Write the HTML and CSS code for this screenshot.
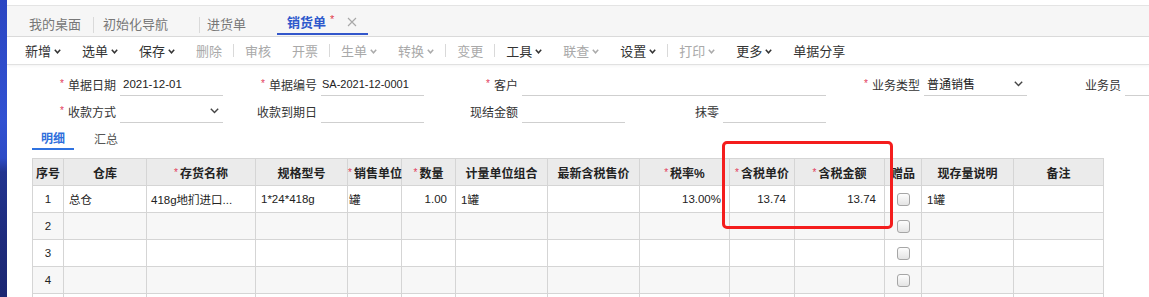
FILE: index.html
```html
<!DOCTYPE html>
<html lang="zh-CN">
<head>
<meta charset="utf-8">
<title>销货单</title>
<link rel="stylesheet" href="styles.css">
</head>
<body>
<div class="app">
  <aside class="rail"></aside>
  <main class="main">
    <div class="topgap"></div>
    <nav class="tabbar">
      <div class="tab t1">我的桌面</div>
      <span class="tab-sep"></span>
      <div class="tab t2">初始化导航</div>
      <span class="tab-sep"></span>
      <div class="tab t3">进货单</div>
      <div class="tab t4 active">销货单<span class="dirty">*</span>
        <svg class="close" width="10" height="10" viewBox="0 0 10 10"><path d="M1 1L9 9M9 1L1 9" stroke="#a8a8a8" stroke-width="1.1" fill="none"/></svg>
      </div>
    </nav>

    <div class="toolbar">
      <span class="tool">新增<svg class="chev" width="7" height="5" viewBox="0 0 7 5"><path d="M0.8 0.8L3.5 3.8L6.2 0.8" fill="none" stroke="#333" stroke-width="1.5"/></svg></span>
      <span class="tool">选单<svg class="chev" width="7" height="5" viewBox="0 0 7 5"><path d="M0.8 0.8L3.5 3.8L6.2 0.8" fill="none" stroke="#333" stroke-width="1.5"/></svg></span>
      <span class="tool">保存<svg class="chev" width="7" height="5" viewBox="0 0 7 5"><path d="M0.8 0.8L3.5 3.8L6.2 0.8" fill="none" stroke="#333" stroke-width="1.5"/></svg></span>
      <span class="tool off">删除</span>
      <span class="tsep"></span>
      <span class="tool off">审核</span>
      <span class="tool off">开票</span>
      <span class="tsep"></span>
      <span class="tool off">生单<svg class="chev" width="7" height="5" viewBox="0 0 7 5"><path d="M0.8 0.8L3.5 3.8L6.2 0.8" fill="none" stroke="#aaa" stroke-width="1.5"/></svg></span>
      <span class="tool off">转换<svg class="chev" width="7" height="5" viewBox="0 0 7 5"><path d="M0.8 0.8L3.5 3.8L6.2 0.8" fill="none" stroke="#aaa" stroke-width="1.5"/></svg></span>
      <span class="tsep"></span>
      <span class="tool off">变更</span>
      <span class="tsep"></span>
      <span class="tool">工具<svg class="chev" width="7" height="5" viewBox="0 0 7 5"><path d="M0.8 0.8L3.5 3.8L6.2 0.8" fill="none" stroke="#333" stroke-width="1.5"/></svg></span>
      <span class="tool off">联查<svg class="chev" width="7" height="5" viewBox="0 0 7 5"><path d="M0.8 0.8L3.5 3.8L6.2 0.8" fill="none" stroke="#aaa" stroke-width="1.5"/></svg></span>
      <span class="tool">设置<svg class="chev" width="7" height="5" viewBox="0 0 7 5"><path d="M0.8 0.8L3.5 3.8L6.2 0.8" fill="none" stroke="#333" stroke-width="1.5"/></svg></span>
      <span class="tsep"></span>
      <span class="tool off">打印<svg class="chev" width="7" height="5" viewBox="0 0 7 5"><path d="M0.8 0.8L3.5 3.8L6.2 0.8" fill="none" stroke="#aaa" stroke-width="1.5"/></svg></span>
      <span class="tool">更多<svg class="chev" width="7" height="5" viewBox="0 0 7 5"><path d="M0.8 0.8L3.5 3.8L6.2 0.8" fill="none" stroke="#333" stroke-width="1.5"/></svg></span>
      <span class="tool">单据分享</span>
    </div>

    <div class="form">
      <label class="lbl req">单据日期</label>
      <div class="fld">2021-12-01</div>
      <label class="lbl req">单据编号</label>
      <div class="fld code">SA-2021-12-0001</div>
      <label class="lbl req">客户</label>
      <div class="fld wide"></div>
      <label class="lbl req">业务类型</label>
      <div class="fld sel">普通销售<svg width="9" height="6" viewBox="0 0 9 6"><path d="M0.8 0.8L4.5 4.6L8.2 0.8" fill="none" stroke="#444" stroke-width="1.4"/></svg></div>
      <label class="lbl">业务员</label>
      <div class="fld"></div>

      <label class="lbl req">收款方式</label>
      <div class="fld sel"><span></span><svg width="9" height="6" viewBox="0 0 9 6"><path d="M0.8 0.8L4.5 4.6L8.2 0.8" fill="none" stroke="#444" stroke-width="1.4"/></svg></div>
      <label class="lbl">收款到期日</label>
      <div class="fld"></div>
      <label class="lbl">现结金额</label>
      <div class="fld"></div>
      <label class="lbl">抹零</label>
      <div class="fld"></div>
    </div>

    <div class="subtabs">
      <span class="subtab on">明细</span>
      <span class="subtab">汇总</span>
    </div>

    <div class="grid-wrap">
      <table class="grid">
        <colgroup>
          <col class="w31"><col class="w83"><col class="w109"><col class="w92"><col class="w54"><col class="w54"><col class="w92"><col class="w92"><col class="w90"><col class="w65"><col class="w90"><col class="w37"><col class="w92"><col class="w90">
        </colgroup>
        <thead>
          <tr>
            <th>序号</th><th>仓库</th><th><i>*</i>存货名称</th><th>规格型号</th><th><i>*</i>销售单位</th><th><i>*</i>数量</th><th>计量单位组合</th><th>最新含税售价</th><th><i>*</i>税率%</th><th><i>*</i>含税单价</th><th><i>*</i>含税金额</th><th>赠品</th><th>现存量说明</th><th>备注</th>
          </tr>
        </thead>
        <tbody>
          <tr>
            <td class="c">1</td><td>总仓</td><td class="txt">418g地扪进口...</td><td>1*24*418g</td><td class="tight">罐</td><td class="num">1.00</td><td>1罐</td><td></td><td class="num">13.00%</td><td class="num">13.74</td><td class="num">13.74</td><td class="c"><span class="cb"></span></td><td>1罐</td><td></td>
          </tr>
          <tr>
            <td class="c">2</td><td></td><td></td><td></td><td></td><td></td><td></td><td></td><td></td><td></td><td></td><td class="c"><span class="cb"></span></td><td></td><td></td>
          </tr>
          <tr>
            <td class="c">3</td><td></td><td></td><td></td><td></td><td></td><td></td><td></td><td></td><td></td><td></td><td class="c"><span class="cb"></span></td><td></td><td></td>
          </tr>
          <tr>
            <td class="c">4</td><td></td><td></td><td></td><td></td><td></td><td></td><td></td><td></td><td></td><td></td><td class="c"><span class="cb"></span></td><td></td><td></td>
          </tr>
          <tr>
            <td class="c"></td><td></td><td></td><td></td><td></td><td></td><td></td><td></td><td></td><td></td><td></td><td class="c"></td><td></td><td></td>
          </tr>
        </tbody>
      </table>
    </div>

    <div class="mark"></div>
  </main>
</div>
</body>
</html>
```

FILE: styles.css
```css
* { box-sizing: border-box; }
html, body { margin: 0; padding: 0; }
body {
  font-family: "Liberation Sans", "Noto Sans CJK SC", sans-serif;
  font-size: 12px;
  color: #333;
  background: #fff;
  overflow: hidden;
}
.app { display: flex; height: 297px; }
.rail {
  width: 7px;
  flex: none;
  background: linear-gradient(to bottom, #2b46c2 0, #3151d2 120px, #2d4bc6 158px, #22348f 172px, #1e2b7c 240px, #1b2772 100%);
}
.main { flex: 1; position: relative; min-width: 0; overflow: hidden; }
.topgap { height: 5px; background: #fff; }

/* top tabs */
.tabbar {
  height: 32px;
  border-top: 1px solid #e4e4e4;
  border-bottom: 1px solid #dcdcdc;
  background: #f6f6f6;
  display: flex;
  padding-left: 12px;
}
.tab {
  display: flex;
  align-items: center;
  padding-top: 4px;
  font-size: 13px;
  color: #777;
  white-space: nowrap;
}
.t1 { width: 74px; padding-left: 10px; }
.t2 { width: 105px; padding-left: 9px; }
.t3 { width: 77px; padding-left: 7px; }
.t4 { width: 91px; padding-left: 10px; }
.tab-sep { width: 1px; background: #dadada; margin: 11px 0 3px; }
.tab.active {
  color: #2d58cc;
  font-weight: bold;
  border-bottom: 2px solid #3357cb;
  margin-bottom: 1px;
}
.dirty { color: #e23a4a; font-weight: normal; font-size: 11px; margin-left: 4px; position: relative; top: -3px; }
.close { margin-left: 13px; }

/* toolbar */
.toolbar {
  height: 28px;
  border-bottom: 1px solid #e1e1e1;
  box-shadow: 0 1px 3px rgba(0, 0, 0, 0.05);
  display: flex;
  align-items: center;
  padding-left: 18px;
  font-size: 13px;
  background: #fff;
}
.tool { display: flex; align-items: center; margin-right: 21px; color: #333; white-space: nowrap; }
.tool.off { color: #a9a9a9; }
.chev { margin-left: 3px; margin-top: 1px; }
.tsep { width: 1px; height: 13px; background: #d9d9d9; margin: 0 11px 0 -10px; }

/* form */
.form {
  display: grid;
  grid-template-columns: repeat(6, 98px 103px);
  row-gap: 3px;
  padding: 7px 0 0 15px;
}
.lbl {
  display: flex;
  justify-content: flex-end;
  align-items: center;
  padding-right: 4px;
  height: 24px;
  white-space: nowrap;
  color: #333;
}
.req::before {
  content: "*";
  color: #e23a5a;
  font-size: 10px;
  margin-right: 4px;
  position: relative;
  top: -1px;
}
.fld {
  height: 24px;
  border-bottom: 1px solid #cfcfcf;
  display: flex;
  align-items: center;
  padding-left: 3px;
  font-size: 11.5px;
  color: #222;
  white-space: nowrap;
}
.fld.code { font-size: 11px; padding-left: 1px; }
.fld.wide { grid-column: span 3; }
.fld.sel { justify-content: space-between; padding-right: 4px; font-size: 12px; }

/* sub tabs */
.subtabs { display: flex; gap: 11px; padding-left: 25px; margin-top: 3px; height: 24px; }
.subtab { display: flex; align-items: center; padding: 0 9px; color: #555; font-size: 12px; }
.subtab.on { color: #2f6fdb; font-weight: bold; border-bottom: 2px solid #2f72e0; }

/* grid */
.grid-wrap { padding-left: 25px; margin-top: 8px; }
.grid { border-collapse: collapse; table-layout: fixed; width: 1071px; }
.w31 { width: 31px; } .w83 { width: 83px; } .w109 { width: 109px; } .w92 { width: 92px; }
.w54 { width: 54px; } .w90 { width: 90px; } .w65 { width: 65px; } .w37 { width: 37px; }
.grid th, .grid td { border: 1px solid #d5d5d5; white-space: nowrap; }
.grid th {
  height: 27px;
  background: #ebebeb;
  font-weight: bold;
  font-size: 12px;
  color: #222;
  text-align: center;
  padding: 0;
  overflow: visible;
}
.grid th i { font-style: normal; font-weight: normal; color: #e23a5a; font-size: 10px; margin-right: 2px; position: relative; top: -2px; }
.grid td {
  height: 27px;
  padding: 0 7px 0 5px;
  font-size: 11.5px;
  color: #222;
  overflow: hidden;
  text-overflow: clip;
}
.grid tbody tr:nth-child(even) td { background: #f7f7f7; }
.grid td.c { text-align: center; padding: 0; }
.grid td.num { text-align: right; padding: 0 8px 0 2px; }
.grid td.txt { padding-left: 4px; }
.grid td.tight { padding-left: 1px; }
.cb {
  display: inline-block;
  width: 13px;
  height: 13px;
  border: 1px solid #a6a6a6;
  border-radius: 3px;
  background: linear-gradient(#fdfdfd, #e4e4e4);
  vertical-align: middle;
}

/* annotation overlay */
.mark {
  position: absolute;
  left: 715px;
  top: 141px;
  width: 171px;
  height: 88px;
  border: 3px solid #f41d1d;
  border-radius: 5px;
  pointer-events: none;
}
```
